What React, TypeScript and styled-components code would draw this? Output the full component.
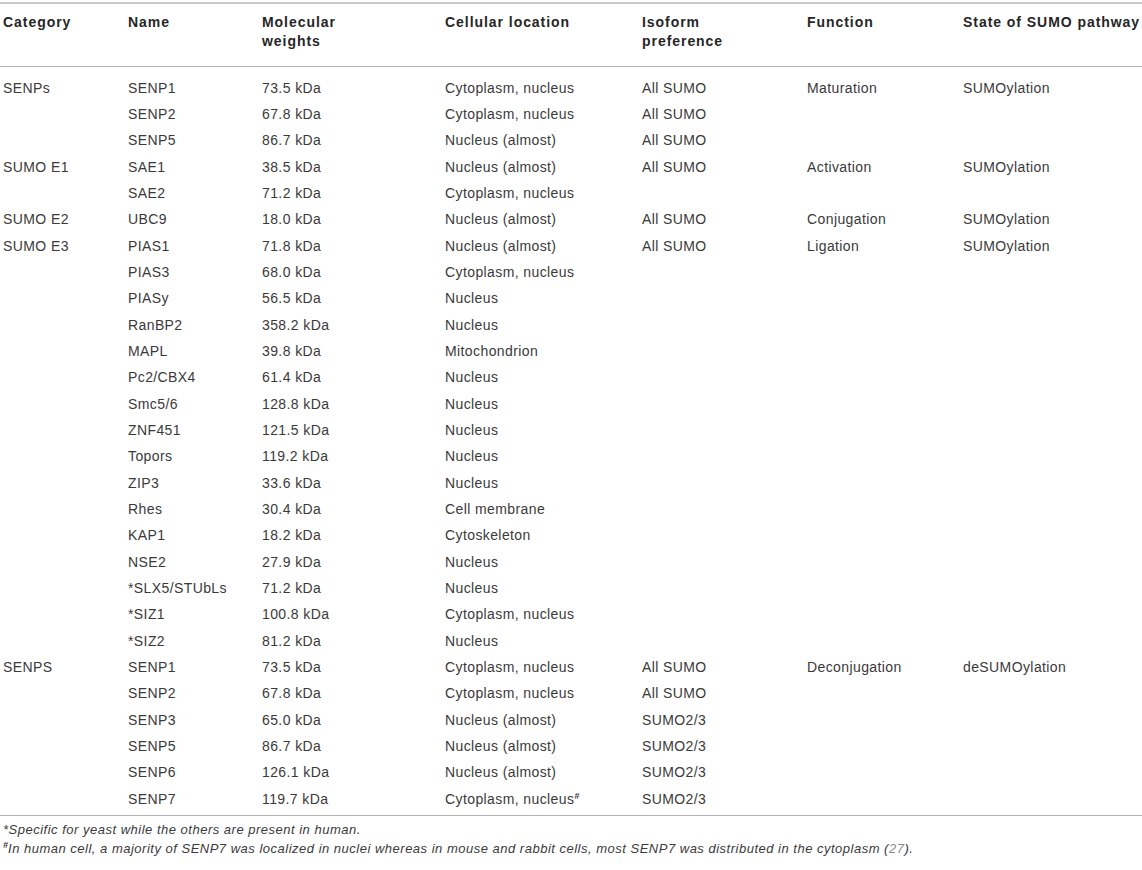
import React from "react";
import styled, { createGlobalStyle } from "styled-components";

const Global = createGlobalStyle`
  html, body { margin: 0; padding: 0; background: #fff; }
  body { font-family: "Liberation Sans", Arial, sans-serif; color: #3a3a3a; }
`;

const Wrap = styled.div`
  width: 1142px;
  padding-top: 2px;
`;

const Table = styled.table`
  width: 1142px;
  border-collapse: collapse;
  table-layout: fixed;
  font-size: 14px;
`;

const Th = styled.th`
  text-align: left;
  vertical-align: top;
  font-weight: bold;
  font-size: 14px;
  letter-spacing: 0.95px;
  line-height: 19px;
  color: #262626;
  white-space: nowrap;
  padding: 8.5px 3px 15.5px 3px;
  border-top: 2px solid #c9c9c9;
  border-bottom: 1px solid #b4b4b4;
`;

const Td = styled.td<{ $first?: boolean; $last?: boolean }>`
  padding: ${(p) => (p.$first ? "7.8px" : "0")} 3px ${(p) => (p.$last ? "2.9px" : "0")} 3px;
  line-height: 26.33px;
  letter-spacing: 0.4px;
  white-space: nowrap;
  vertical-align: top;
  color: #3a3a3a;
  border-bottom: ${(p) => (p.$last ? "1px solid #b4b4b4" : "none")};
`;

const Sup = styled.sup`
  font-size: 9px;
  line-height: 0;
  vertical-align: 5px;
  font-weight: bold;
  letter-spacing: 0;
`;

const Notes = styled.div`
  margin-top: 4.5px;
  padding-left: 3px;
  font-size: 13px;
  letter-spacing: 0.5px;
  line-height: 19px;
  font-style: italic;
  white-space: nowrap;
  color: #3a3a3a;
`;

const Ref = styled.span`
  color: #8a8a8a;
`;

type Row = [string, string, string, React.ReactNode, string, string, string];

const rows: Row[] = [
  ["SENPs", "SENP1", "73.5 kDa", "Cytoplasm, nucleus", "All SUMO", "Maturation", "SUMOylation"],
  ["", "SENP2", "67.8 kDa", "Cytoplasm, nucleus", "All SUMO", "", ""],
  ["", "SENP5", "86.7 kDa", "Nucleus (almost)", "All SUMO", "", ""],
  ["SUMO E1", "SAE1", "38.5 kDa", "Nucleus (almost)", "All SUMO", "Activation", "SUMOylation"],
  ["", "SAE2", "71.2 kDa", "Cytoplasm, nucleus", "", "", ""],
  ["SUMO E2", "UBC9", "18.0 kDa", "Nucleus (almost)", "All SUMO", "Conjugation", "SUMOylation"],
  ["SUMO E3", "PIAS1", "71.8 kDa", "Nucleus (almost)", "All SUMO", "Ligation", "SUMOylation"],
  ["", "PIAS3", "68.0 kDa", "Cytoplasm, nucleus", "", "", ""],
  ["", "PIASy", "56.5 kDa", "Nucleus", "", "", ""],
  ["", "RanBP2", "358.2 kDa", "Nucleus", "", "", ""],
  ["", "MAPL", "39.8 kDa", "Mitochondrion", "", "", ""],
  ["", "Pc2/CBX4", "61.4 kDa", "Nucleus", "", "", ""],
  ["", "Smc5/6", "128.8 kDa", "Nucleus", "", "", ""],
  ["", "ZNF451", "121.5 kDa", "Nucleus", "", "", ""],
  ["", "Topors", "119.2 kDa", "Nucleus", "", "", ""],
  ["", "ZIP3", "33.6 kDa", "Nucleus", "", "", ""],
  ["", "Rhes", "30.4 kDa", "Cell membrane", "", "", ""],
  ["", "KAP1", "18.2 kDa", "Cytoskeleton", "", "", ""],
  ["", "NSE2", "27.9 kDa", "Nucleus", "", "", ""],
  ["", "*SLX5/STUbLs", "71.2 kDa", "Nucleus", "", "", ""],
  ["", "*SIZ1", "100.8 kDa", "Cytoplasm, nucleus", "", "", ""],
  ["", "*SIZ2", "81.2 kDa", "Nucleus", "", "", ""],
  ["SENPS", "SENP1", "73.5 kDa", "Cytoplasm, nucleus", "All SUMO", "Deconjugation", "deSUMOylation"],
  ["", "SENP2", "67.8 kDa", "Cytoplasm, nucleus", "All SUMO", "", ""],
  ["", "SENP3", "65.0 kDa", "Nucleus (almost)", "SUMO2/3", "", ""],
  ["", "SENP5", "86.7 kDa", "Nucleus (almost)", "SUMO2/3", "", ""],
  ["", "SENP6", "126.1 kDa", "Nucleus (almost)", "SUMO2/3", "", ""],
  [
    "",
    "SENP7",
    "119.7 kDa",
    <>
      Cytoplasm, nucleus<Sup>#</Sup>
    </>,
    "SUMO2/3",
    "",
    "",
  ],
];

const widths = [125, 134, 183, 197, 165, 156, 182];
const headers: React.ReactNode[] = [
  "Category",
  "Name",
  <>
    Molecular
    <br />
    weights
  </>,
  "Cellular location",
  <>
    Isoform
    <br />
    preference
  </>,
  "Function",
  "State of SUMO pathway",
];

export default function App() {
  return (
    <Wrap>
      <Global />
      <Table>
        <colgroup>
          {widths.map((w, i) => (
            <col key={i} style={{ width: w }} />
          ))}
        </colgroup>
        <thead>
          <tr>
            {headers.map((h, i) => (
              <Th key={i}>{h}</Th>
            ))}
          </tr>
        </thead>
        <tbody>
          {rows.map((r, ri) => (
            <tr key={ri}>
              {r.map((c, ci) => (
                <Td key={ci} $first={ri === 0} $last={ri === rows.length - 1}>
                  {c}
                </Td>
              ))}
            </tr>
          ))}
        </tbody>
      </Table>
      <Notes>
        <div>*Specific for yeast while the others are present in human.</div>
        <div>
          <Sup>#</Sup>In human cell, a majority of SENP7 was localized in nuclei whereas in mouse and rabbit cells, most SENP7 was distributed in the cytoplasm (<Ref>27</Ref>).
        </div>
      </Notes>
    </Wrap>
  );
}
